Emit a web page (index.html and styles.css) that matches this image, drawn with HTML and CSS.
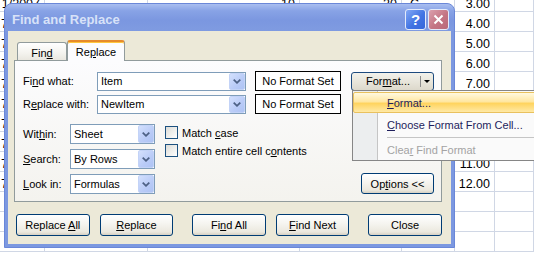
FILE: index.html
```html
<!DOCTYPE html>
<html lang="en">
<head>
    <meta charset="UTF-8">
    <title>Find and Replace</title>
    <link rel="stylesheet" href="styles.css">
</head>
<body>
    <!-- worksheet behind the dialog -->
    <div class="sheet">
        <div class="row"><div class="num">1/2007</div><div></div><div class="num">10</div><div class="num">20</div><div class="pad">C</div><div class="num">3.00</div><div></div></div>
        <div class="row"><div>7/1/2007</div><div></div><div></div><div></div><div></div><div class="num">4.00</div><div></div></div>
        <div class="row"><div>7/2/2007</div><div></div><div></div><div></div><div></div><div class="num">5.00</div><div></div></div>
        <div class="row"><div>7/3/2007</div><div></div><div></div><div></div><div></div><div class="num">6.00</div><div></div></div>
        <div class="row"><div>7/4/2007</div><div></div><div></div><div></div><div></div><div class="num">7.00</div><div></div></div>
        <div class="row"><div>7/5/2007</div><div></div><div></div><div></div><div></div><div class="num">8.00</div><div></div></div>
        <div class="row"><div>7/6/2007</div><div></div><div></div><div></div><div></div><div class="num">9.00</div><div></div></div>
        <div class="row"><div>7/7/2007</div><div></div><div></div><div></div><div></div><div class="num">10.00</div><div></div></div>
        <div class="row"><div>7/8/2007</div><div></div><div></div><div></div><div></div><div class="num">11.00</div><div></div></div>
        <div class="row"><div>7/9/2007</div><div></div><div></div><div></div><div></div><div class="num">12.00</div><div></div></div>
        <div class="row"><div></div><div></div><div></div><div></div><div></div><div></div><div></div></div>
        <div class="row"><div></div><div></div><div></div><div></div><div></div><div></div><div></div></div>
        <div class="row"><div></div><div></div><div></div><div></div><div></div><div></div><div></div></div>
    </div>

    <div class="dialog">
        <div class="titlebar">
            <span class="title">Find and Replace</span>
            <span class="cap-btn help">?</span>
            <span class="cap-btn close">
                <svg width="11" height="11" viewBox="0 0 11 11"><path d="M1.5 1.5l8 8M9.5 1.5l-8 8" stroke="#fff" stroke-width="2" fill="none"/></svg>
            </span>
        </div>

        <div class="dialog-body">
            <div class="tabs">
                <div class="tab"><span>Fin<u>d</u></span></div>
                <div class="tab active"><span>Re<u>p</u>lace</span></div>
            </div>

            <div class="panel">
                <div class="field-row">
                    <label class="lbl-long">Fi<u>n</u>d what:</label>
                    <div class="combo wide"><span>Item</span><i class="drop"><svg width="8" height="5" viewBox="0 0 8 5"><path d="M0.7 0.7l3.3 3.1 3.3-3.1" stroke="#4d6185" stroke-width="1.8" fill="none"/></svg></i></div>
                    <div class="fmt-box">No Format Set</div>
                    <div class="split-btn">
                        <span class="split-main">For<u>m</u>at...</span>
                        <span class="split-arrow"></span>
                    </div>
                </div>
                <div class="field-row">
                    <label class="lbl-long">R<u>e</u>place with:</label>
                    <div class="combo wide"><span>NewItem</span><i class="drop"><svg width="8" height="5" viewBox="0 0 8 5"><path d="M0.7 0.7l3.3 3.1 3.3-3.1" stroke="#4d6185" stroke-width="1.8" fill="none"/></svg></i></div>
                    <div class="fmt-box">No Format Set</div>
                </div>

                <div class="lower">
                    <div class="opts">
                        <div class="opt-row">
                            <label>Wit<u>h</u>in:</label>
                            <div class="combo narrow"><span>Sheet</span><i class="drop"><svg width="8" height="5" viewBox="0 0 8 5"><path d="M0.7 0.7l3.3 3.1 3.3-3.1" stroke="#4d6185" stroke-width="1.8" fill="none"/></svg></i></div>
                        </div>
                        <div class="opt-row">
                            <label><u>S</u>earch:</label>
                            <div class="combo narrow"><span>By Rows</span><i class="drop"><svg width="8" height="5" viewBox="0 0 8 5"><path d="M0.7 0.7l3.3 3.1 3.3-3.1" stroke="#4d6185" stroke-width="1.8" fill="none"/></svg></i></div>
                        </div>
                        <div class="opt-row">
                            <label><u>L</u>ook in:</label>
                            <div class="combo narrow"><span>Formulas</span><i class="drop"><svg width="8" height="5" viewBox="0 0 8 5"><path d="M0.7 0.7l3.3 3.1 3.3-3.1" stroke="#4d6185" stroke-width="1.8" fill="none"/></svg></i></div>
                        </div>
                    </div>

                    <div class="checks">
                        <div class="check"><span class="box"></span><span>Match <u>c</u>ase</span></div>
                        <div class="check"><span class="box"></span><span>Match entire cell c<u>o</u>ntents</span></div>
                    </div>

                    <button class="btn options">Op<u>t</u>ions &lt;&lt;</button>
                </div>
            </div>

            <div class="actions">
                <button class="btn">Replace <u>A</u>ll</button>
                <button class="btn"><u>R</u>eplace</button>
                <button class="btn wide-gap">Fi<u>n</u>d All</button>
                <button class="btn"><u>F</u>ind Next</button>
                <button class="btn wide-gap">Close</button>
            </div>
        </div>
    </div>

    <!-- Format... drop-down menu -->
    <div class="menu">
        <div class="item hot"><span><u>F</u>ormat...</span></div>
        <div class="item tall"><span><u>C</u>hoose Format From Cell...</span></div>
        <div class="sep"></div>
        <div class="item off"><span>Clea<u>r</u> Find Format</span></div>
    </div>
</body>
</html>
```

FILE: styles.css
```css
body {
    margin: 0;
    width: 534px;
    height: 253px;
    overflow: hidden;
    position: relative;
    background: #fff;
    font-family: "Liberation Sans", Arial, sans-serif;
    font-size: 11px;
    color: #000;
}

u {
    text-decoration-thickness: 1px;
    text-underline-offset: 1px;
}

/* worksheet */
.sheet {
    margin-top: -8px;
}

.row {
    display: grid;
    grid-template-columns: 45px 103px 152px 102px 53px 40px 39px;
    height: 20px;
}

.row > div {
    box-sizing: border-box;
    border-right: 1px solid #d0d7e5;
    border-bottom: 1px solid #d0d7e5;
    padding: 0 3px 0 1px;
    display: flex;
    align-items: flex-end;
    overflow: hidden;
    white-space: nowrap;
    font-size: 12.5px;
    line-height: 14px;
}

.row > .num {
    justify-content: flex-end;
    padding-right: 4px;
}

.row > .pad {
    padding-left: 8px;
}

/* dialog window */
.dialog {
    position: absolute;
    left: 4px;
    top: 3px;
    width: 451px;
    height: 245px;
    box-sizing: border-box;
    border: 1px solid #6a87d8;
    border-radius: 8px 8px 0 0;
    background: #7c98e0;
    display: flex;
    flex-direction: column;
}

.titlebar {
    height: 27px;
    flex: none;
    box-sizing: border-box;
    padding: 4px 5px 0 7px;
    display: flex;
    align-items: center;
    background: linear-gradient(#a9bef0, #88a3e6 25%, #7b97e0 60%, #7f9be1);
    border-radius: 7px 7px 0 0;
}

.title {
    flex: 1;
    font-weight: bold;
    font-size: 13px;
    color: #d8e2f8;
}

.cap-btn {
    width: 21px;
    height: 21px;
    box-sizing: border-box;
    border: 1px solid #e4ebfb;
    border-radius: 3px;
    display: flex;
    align-items: center;
    justify-content: center;
}

.help {
    margin-right: 2px;
    background: linear-gradient(135deg, #82a8f5, #4274e3 55%, #3566da);
    color: #fff;
    font-weight: bold;
    font-size: 15px;
}

.close {
    background: linear-gradient(135deg, #dba0ad, #c47584 55%, #b96a7a);
}

.dialog-body {
    flex: 1;
    margin: 0 3px 3px;
    padding: 9px 9px 0 6px;
    background: #ece9d8;
    display: flex;
    flex-direction: column;
}

/* tabs */
.tabs {
    display: flex;
    height: 20px;
    padding-left: 3px;
}

.tab {
    margin-top: 2px;
    width: 50px;
    height: 18px;
    box-sizing: border-box;
    padding-top: 2px;
    border: 1px solid #919b9c;
    border-bottom: none;
    border-radius: 3px 3px 0 0;
    background: linear-gradient(#fff, #f4f3ee 60%, #e9e7df);
    display: flex;
    align-items: center;
    justify-content: center;
}

.tab.active {
    position: relative;
    z-index: 1;
    margin-top: 0;
    width: 58px;
    height: 21px;
    padding-top: 1px;
    border-top: 2px solid #e68b2c;
    box-shadow: inset 0 1px #ffc73c;
    background: #fcfcfe;
}

.panel {
    height: 142px;
    box-sizing: border-box;
    border: 1px solid #919b9c;
    padding: 10px 7px 7px 8px;
    background: linear-gradient(#fcfcfe, #f4f3ee);
    display: flex;
    flex-direction: column;
}

.field-row {
    display: flex;
    align-items: center;
    height: 20px;
}

.field-row + .field-row {
    margin-top: 3px;
}

.lbl-long {
    width: 74px;
}

.combo {
    height: 19px;
    box-sizing: border-box;
    border: 1px solid #7f9db9;
    background: #fff;
    padding: 0 0 0 3px;
    display: flex;
    align-items: center;
}

.combo span {
    flex: 1;
}

.combo.wide {
    width: 149px;
}

.combo.narrow {
    width: 85px;
    height: 20px;
}

.drop {
    width: 16px;
    height: 100%;
    box-sizing: border-box;
    border: 1px solid #c3d3f7;
    border-radius: 2px;
    background: linear-gradient(135deg, #d3e0fd, #b9cbf7 60%, #aec3f4);
    display: flex;
    align-items: center;
    justify-content: center;
}

.fmt-box {
    margin-left: 9px;
    width: 86px;
    height: 20px;
    box-sizing: border-box;
    border: 1px solid #000;
    background: #fff;
    display: flex;
    align-items: center;
    justify-content: center;
}

.split-btn {
    margin-left: 10px;
    width: 83px;
    height: 19px;
    box-sizing: border-box;
    border: 1px solid #1d4a7e;
    border-radius: 3px;
    background: linear-gradient(#f2f1eb, #e6e3d8 60%, #dcd8cb);
    display: flex;
    align-items: center;
}

.split-main {
    flex: 1;
    text-align: center;
    padding-left: 4px;
    border-right: 1px solid #8d8d8d;
    line-height: 11px;
}

.split-arrow {
    width: 0;
    height: 0;
    margin: 0 3px 0 3px;
    border-left: 3px solid transparent;
    border-right: 3px solid transparent;
    border-top: 3px solid #000;
}

.lower {
    margin-top: 10px;
    flex: 1;
    display: flex;
}

.opts {
    display: flex;
    flex-direction: column;
    gap: 5px;
}

.opt-row {
    display: flex;
    align-items: center;
    height: 20px;
}

.opt-row label {
    width: 47px;
}

.checks {
    margin-left: 10px;
    padding-top: 2px;
    display: flex;
    flex-direction: column;
    gap: 5px;
}

.check {
    display: flex;
    align-items: center;
    height: 13px;
}

.box {
    width: 13px;
    height: 13px;
    box-sizing: border-box;
    margin-right: 4px;
    border: 1px solid #1c5180;
    background: linear-gradient(135deg, #dcdcd7, #fff);
}

/* push buttons */
.btn {
    width: 74px;
    height: 22px;
    box-sizing: border-box;
    padding: 0;
    border: 1px solid #003c74;
    border-radius: 3px;
    background: linear-gradient(#fff, #f5f4ef 45%, #ebe8de 85%, #d6d0c3);
    font: inherit;
    color: #000;
}

.options {
    margin-left: auto;
    align-self: flex-end;
    width: 73px;
    height: 21px;
}

.actions {
    margin-top: 12px;
    padding-left: 2px;
    display: flex;
}

.actions .btn + .btn {
    margin-left: 10px;
}

.actions .btn.wide-gap {
    margin-left: 19px;
}

/* drop-down menu */
.menu {
    position: absolute;
    left: 352px;
    top: 90px;
    width: 200px;
    height: 71px;
    box-sizing: border-box;
    border: 1px solid #868686;
    padding-top: 1px;
    background: linear-gradient(90deg, #eceeef 0 24px, #c5c5c5 24px 25px, #fafafa 25px);
}

.item {
    height: 21px;
    box-sizing: border-box;
    padding-left: 34px;
    display: flex;
    align-items: center;
    color: #1e1e5c;
}

.item.hot {
    padding-left: 33px;
    border: 1px solid #e9c15e;
    border-radius: 2px;
    background: linear-gradient(#fff9e0, #ffe7a2 45%, #ffd45f 55%, #ffe9a6);
}

.item.tall {
    margin-top: 1px;
    height: 22px;
}

.item.off {
    color: #a3a3a3;
}

.sep {
    height: 1px;
    margin: 1px 0 1px 34px;
    background: #c5c5c5;
}
```
